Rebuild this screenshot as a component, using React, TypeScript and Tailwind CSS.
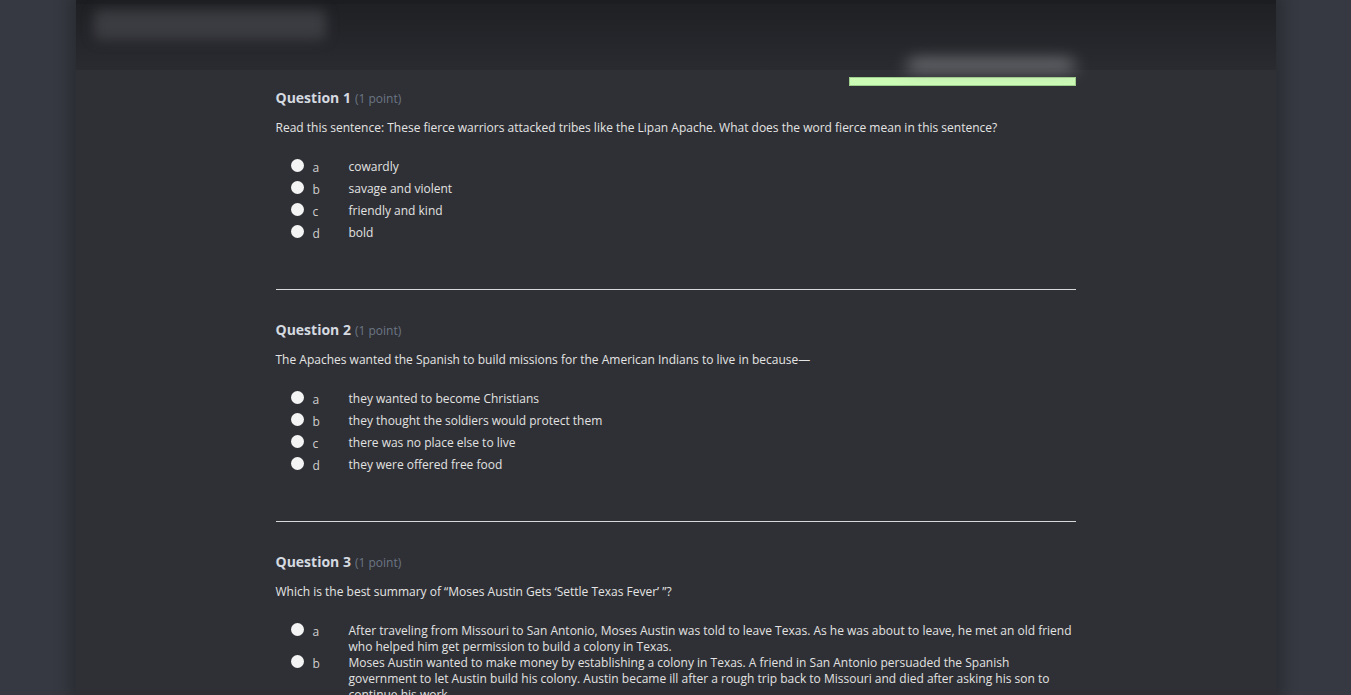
import React from 'react';

type Option = { letter: string; text: string };
type Question = { n: number; prompt: string; options: Option[] };

const QUESTIONS: Question[] = [
  {
    n: 1,
    prompt:
      'Read this sentence: These fierce warriors attacked tribes like the Lipan Apache. What does the word fierce mean in this sentence?',
    options: [
      { letter: 'a', text: 'cowardly' },
      { letter: 'b', text: 'savage and violent' },
      { letter: 'c', text: 'friendly and kind' },
      { letter: 'd', text: 'bold' },
    ],
  },
  {
    n: 2,
    prompt: 'The Apaches wanted the Spanish to build missions for the American Indians to live in because\u2014',
    options: [
      { letter: 'a', text: 'they wanted to become Christians' },
      { letter: 'b', text: 'they thought the soldiers would protect them' },
      { letter: 'c', text: 'there was no place else to live' },
      { letter: 'd', text: 'they were offered free food' },
    ],
  },
  {
    n: 3,
    prompt: 'Which is the best summary of \u201cMoses Austin Gets \u2018Settle Texas Fever\u2019 \u201d?',
    options: [
      {
        letter: 'a',
        text: 'After traveling from Missouri to San Antonio, Moses Austin was told to leave Texas. As he was about to leave, he met an old friend who helped him get permission to build a colony in Texas.',
      },
      {
        letter: 'b',
        text: 'Moses Austin wanted to make money by establishing a colony in Texas. A friend in San Antonio persuaded the Spanish government to let Austin build his colony. Austin became ill after a rough trip back to Missouri and died after asking his son to continue his work.',
      },
      {
        letter: 'c',
        text: 'Moses Austin traveled to San Antonio to ask the Spanish government for permission to build a colony.',
      },
    ],
  },
];

const QuestionBlock: React.FC<{ q: Question; last: boolean }> = ({ q, last }) => (
  <div>
    <div className="flex items-baseline h-[20px] leading-[20px]">
      <span className="text-[14px] font-bold text-[#d5dae0]">Question {q.n}</span>
      <span className="ml-[4px] text-[12px] text-[#6b7685]">(1 point)</span>
    </div>
    <p className="mt-[12px] text-[12px] leading-[16px] text-[#e4e4e4]">{q.prompt}</p>
    <div className="mt-[23px] flex flex-col">
      {q.options.map((o) => (
        <label key={o.letter} className="flex items-start min-h-[22px]">
          <span className="ml-[15px] mt-[0px] w-[13px] h-[13px] rounded-full bg-[#f4f4f4] shrink-0" />
          <span className="ml-[9px] mt-[1px] w-[36px] shrink-0 text-[12px] leading-[16px] text-[#cfcfcf]">{o.letter}</span>
          <span className="flex-1 text-[12px] leading-[16px] text-[#e2e2e2]">{o.text}</span>
        </label>
      ))}
    </div>
    {!last && <div className="mt-[42px] mb-[30px] h-px bg-[#d8d8d8]" />}
  </div>
);

export default function App() {
  return (
    <div
      className="h-[695px] overflow-hidden bg-[#363941] flex justify-center"
      style={{ fontFamily: '"Open Sans", "Noto Sans", sans-serif' }}
    >
      <div className="w-[1200px] bg-[#2f3035] shadow-[0_0_14px_6px_rgba(20,20,24,0.35)] flex flex-col">
        <div className="h-[70px] shrink-0 bg-gradient-to-b from-[#1f2024] to-[#2a2b30] flex justify-between border-t-[4px] border-[#1c1d20]">
          <div className="ml-[18px] mt-[6px] w-[232px] h-[30px] rounded-md bg-[#3b3c41] blur-[6px]" />
          <div className="mr-[200px] self-end w-[170px] h-[10px] rounded-t-full bg-[#9a9b9f] blur-[8px] opacity-80" />
        </div>
        <div className="px-[200px]">
          <div className="flex justify-end">
            <div className="mt-[7px] w-[227px] h-[9px] bg-[#ccfbb6] border border-[#9fcf8c]" />
          </div>
          <div className="mt-[2px]">
            {QUESTIONS.map((q, i) => (
              <QuestionBlock key={q.n} q={q} last={i === QUESTIONS.length - 1} />
            ))}
          </div>
        </div>
      </div>
    </div>
  );
}
